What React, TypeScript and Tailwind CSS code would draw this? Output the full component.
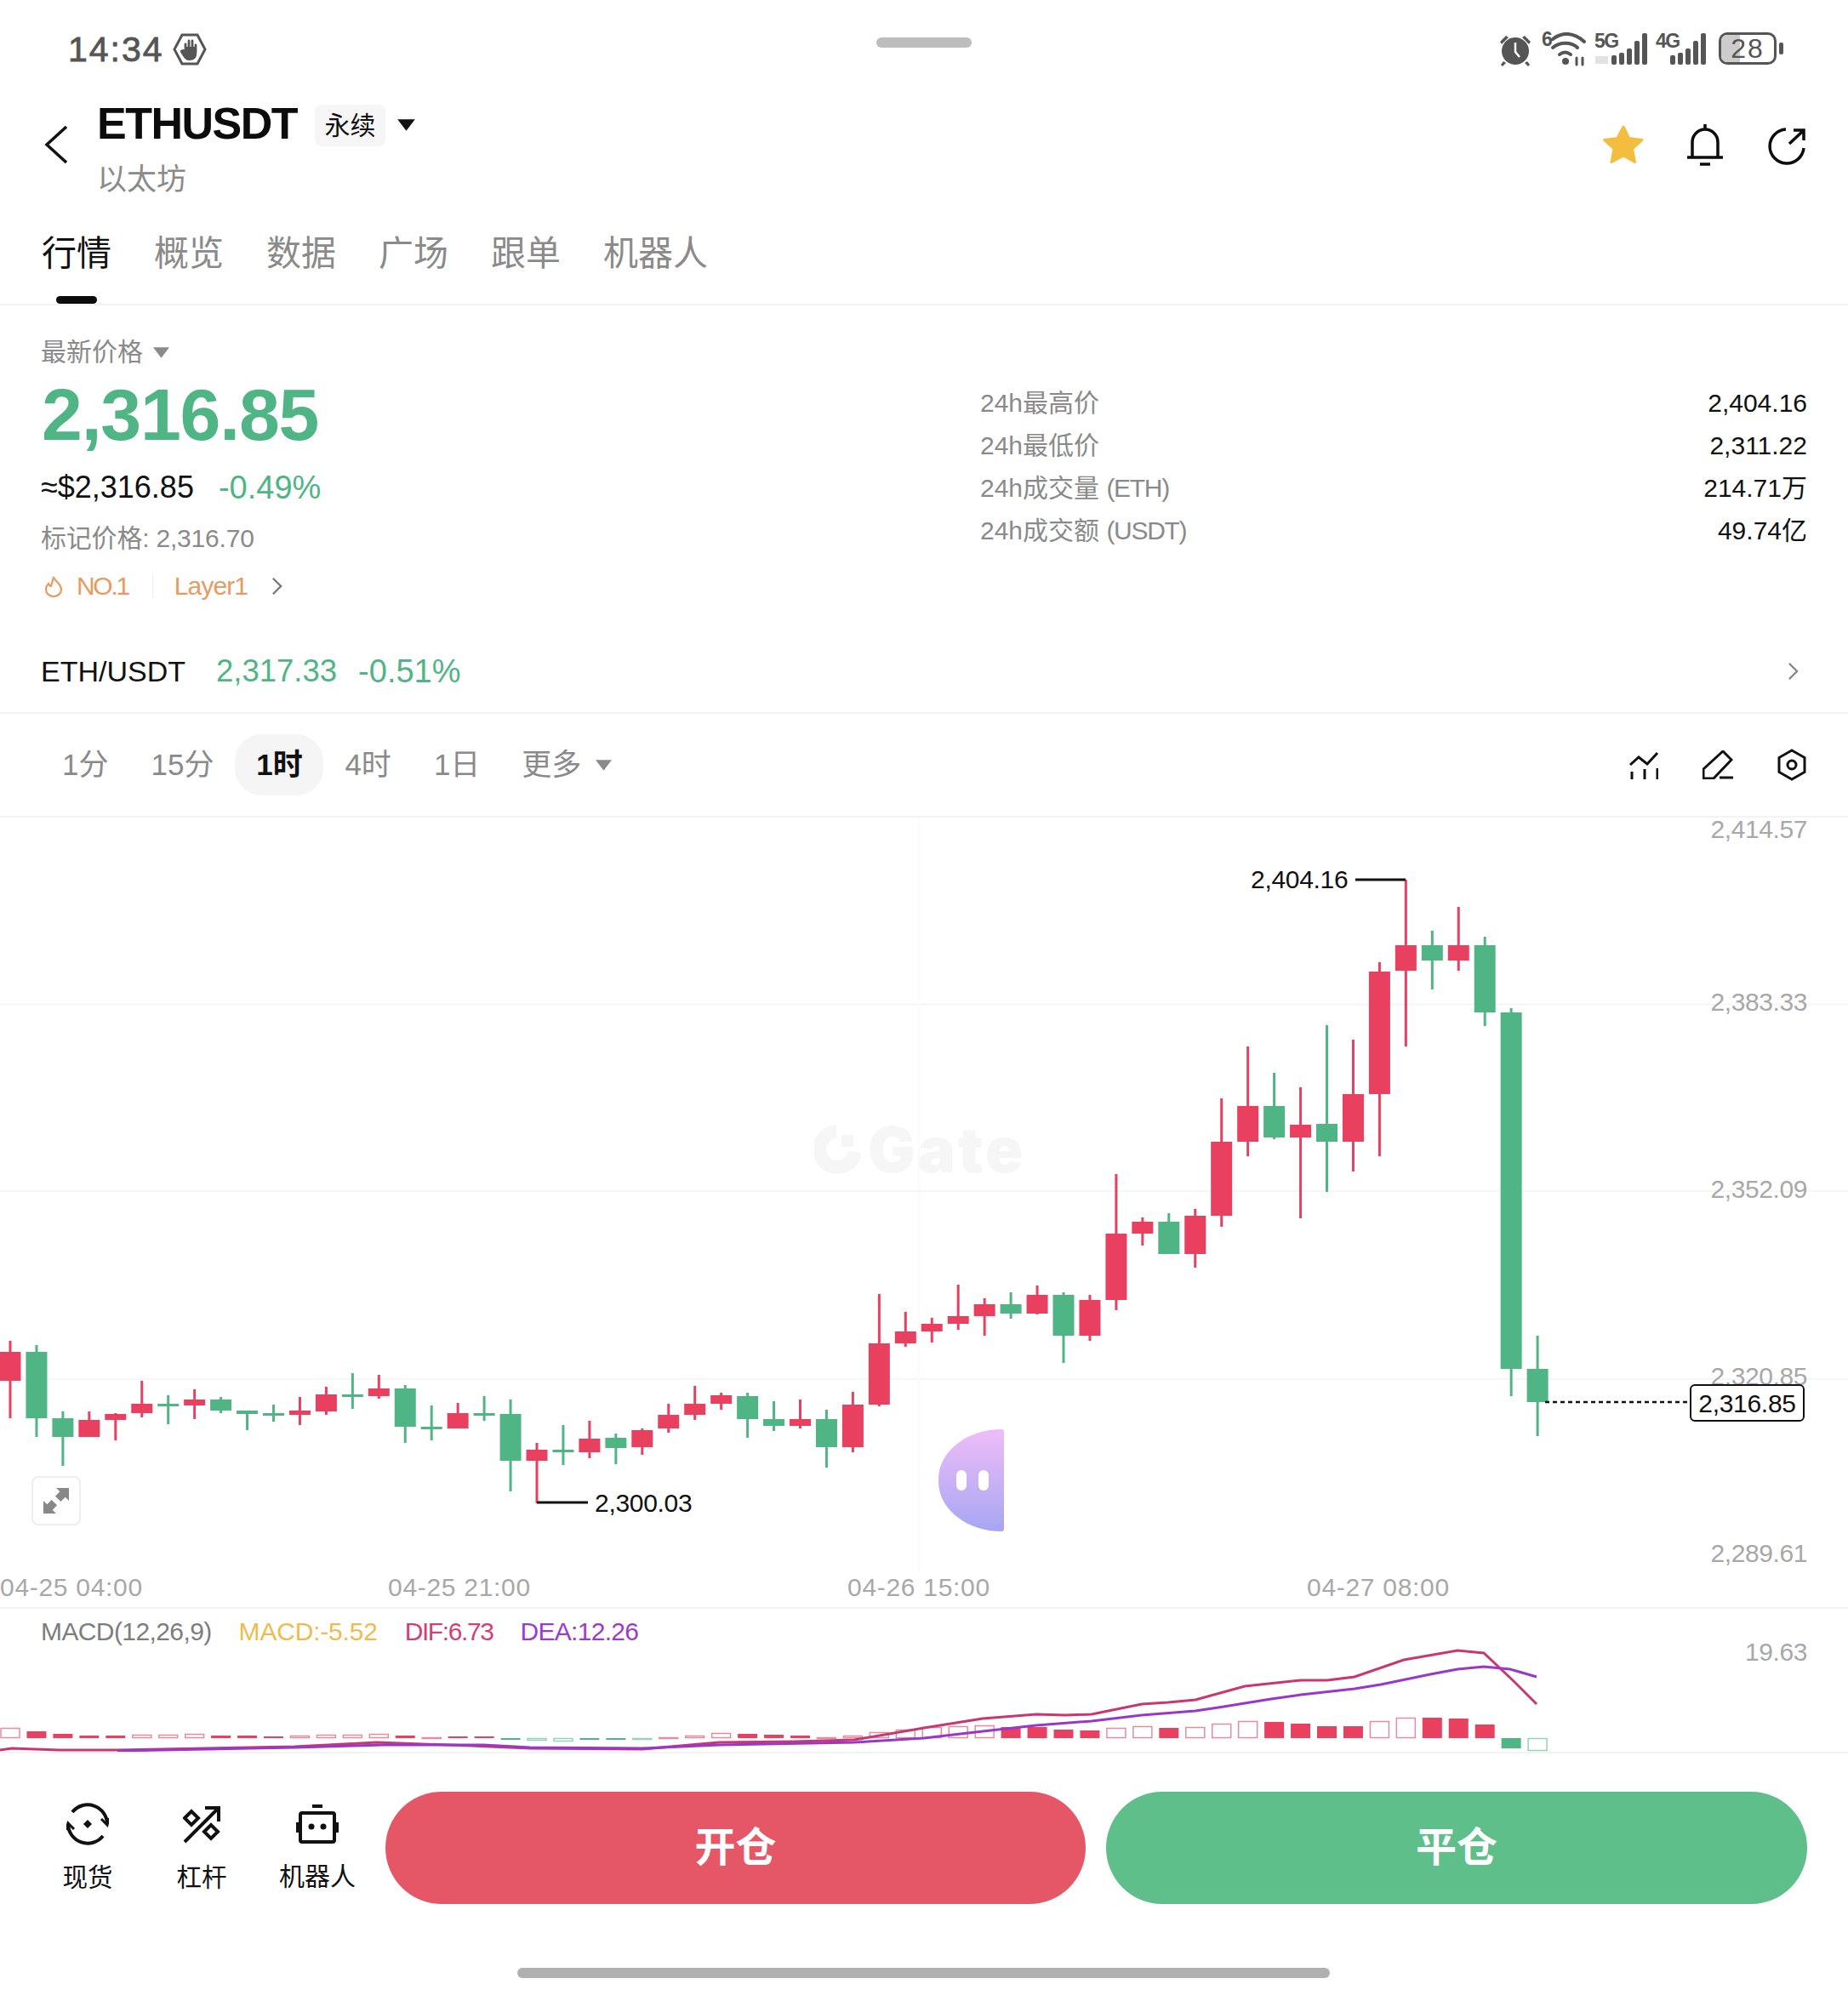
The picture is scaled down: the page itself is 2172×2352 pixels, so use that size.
const RED = "#ea4060";
const GREEN = "#50b584";

// [high, body top, body bottom, low, color] in page pixels
const candles: [number, number, number, number, "r" | "g"][] = [
  [1576, 1589, 1623, 1667, "r"], [1581, 1589, 1667, 1689, "g"], [1659, 1667, 1689, 1723, "g"], [1659, 1669, 1689, 1689, "r"],
  [1661, 1662, 1669, 1693, "r"], [1623, 1650, 1661, 1666, "r"], [1640, 1650, 1653, 1674, "g"], [1633, 1645, 1652, 1668, "r"],
  [1642, 1645, 1658, 1661, "g"], [1658, 1658, 1662, 1681, "g"], [1651, 1661, 1663, 1671, "g"], [1642, 1658, 1663, 1675, "r"],
  [1630, 1639, 1659, 1663, "r"], [1614, 1639, 1641, 1656, "g"], [1616, 1632, 1641, 1644, "r"], [1628, 1632, 1677, 1696, "g"],
  [1652, 1677, 1679, 1693, "g"], [1649, 1661, 1679, 1679, "r"], [1641, 1661, 1663, 1670, "g"], [1645, 1662, 1717, 1753, "g"],
  [1696, 1704, 1717, 1767, "r"], [1675, 1704, 1707, 1722, "g"], [1670, 1691, 1707, 1714, "r"], [1685, 1690, 1702, 1721, "g"],
  [1679, 1681, 1701, 1710, "r"], [1650, 1663, 1679, 1684, "r"], [1629, 1650, 1663, 1669, "r"], [1637, 1640, 1650, 1657, "r"],
  [1637, 1641, 1668, 1690, "g"], [1647, 1668, 1676, 1682, "g"], [1645, 1668, 1676, 1679, "r"], [1657, 1668, 1701, 1725, "g"],
  [1636, 1651, 1701, 1707, "r"], [1521, 1579, 1651, 1653, "r"], [1542, 1565, 1579, 1583, "r"], [1549, 1556, 1565, 1578, "r"],
  [1510, 1547, 1556, 1563, "r"], [1526, 1533, 1547, 1570, "r"], [1519, 1533, 1544, 1550, "g"], [1511, 1522, 1544, 1545, "r"],
  [1519, 1522, 1570, 1602, "g"], [1522, 1528, 1570, 1576, "r"], [1380, 1450, 1528, 1540, "r"], [1431, 1436, 1450, 1464, "r"],
  [1426, 1436, 1474, 1474, "g"], [1421, 1429, 1474, 1490, "r"], [1291, 1342, 1429, 1442, "r"], [1230, 1300, 1342, 1359, "r"],
  [1261, 1300, 1337, 1339, "g"], [1278, 1322, 1337, 1432, "r"], [1205, 1321, 1342, 1401, "g"], [1222, 1286, 1342, 1377, "r"],
  [1131, 1142, 1286, 1359, "r"], [1034, 1111, 1141, 1230, "r"], [1094, 1111, 1129, 1163, "g"], [1066, 1111, 1129, 1141, "r"],
  [1101, 1111, 1190, 1206, "g"], [1185, 1190, 1609, 1641, "g"], [1570, 1609, 1648, 1688, "g"],
];

// [top of bar, filled]; everything hangs off the zero line
const macdBars: [number, boolean][] = [
  [2031, false], [2035, true], [2038, true], [2040, true], [2040, true], [2039, false], [2039, false], [2038, false],
  [2040, true], [2040, true], [2041, true], [2040, false], [2039, false], [2039, false], [2038, false], [2040, true],
  [2042, false], [2041, true], [2041, true], [2043, true], [2043, false], [2043, false], [2043, true], [2043, true],
  [2043, false], [2042, false], [2040, false], [2037, false], [2038, true], [2039, true], [2040, true], [2042, false],
  [2040, false], [2036, false], [2033, false], [2030, false], [2029, false], [2028, false], [2030, true], [2030, true],
  [2033, true], [2034, true], [2031, false], [2029, false], [2031, true], [2030, false], [2026, false], [2023, false],
  [2024, true], [2026, true], [2029, true], [2029, true], [2023, false], [2019, false], [2019, true], [2020, true],
  [2027, true], [2043, true], [2043, false],
];
const greenBarBottoms: Record<number, number> = { 19: 2044, 20: 2046, 21: 2047, 22: 2045, 23: 2045, 24: 2044, 57: 2055, 58: 2058 };

const difLine =
  "0,2057 14,2055 69,2057 138,2057 242,2055 346,2053 443,2048 554,2052 623,2055 755,2056 845,2048 935,2047 1004,2045 1086,2031 1155,2020 1218,2015 1252,2016 1283,2015 1342,2003 1373,2001 1405,1998 1463,1982 1529,1975 1560,1975 1592,1971 1650,1951 1713,1940 1744,1943 1778,1975 1806,2003";
const deaLine =
  "138,2058 346,2054 450,2051 568,2051 623,2054 755,2055 845,2051 1004,2048 1086,2043 1155,2035 1218,2028 1283,2023 1342,2016 1405,2011 1432,2007 1494,1997 1529,1992 1592,1985 1623,1980 1681,1968 1713,1962 1744,1959 1775,1962 1806,1971";

const barX = (i: number) => 12 + 30.95 * i;

const tabs = ["行情", "概览", "数据", "广场", "跟单", "机器人"];
const stats = [
  ["24h最高价", "", "2,404.16"],
  ["24h最低价", "", "2,311.22"],
  ["24h成交量 ", "(ETH)", "214.71万"],
  ["24h成交额 ", "(USDT)", "49.74亿"],
];

function Caret({ className }: { className: string }) {
  return (
    <svg viewBox="0 0 20 14" className={className} fill="currentColor">
      <path d="M1 1h18L10 13z" />
    </svg>
  );
}

function Chevron({ className }: { className: string }) {
  return (
    <svg viewBox="0 0 14 24" className={className} fill="none" stroke="currentColor" strokeWidth="2.5">
      <path d="M2 2l10 10L2 22" />
    </svg>
  );
}

function Signal() {
  return (
    <div className="flex items-end gap-[3px]">
      {[11, 14, 19, 28, 37].map((h, i) => (
        <div key={i} className="w-[6px] rounded-[2px] bg-[#555]" style={{ height: h }} />
      ))}
    </div>
  );
}

function StatusBar() {
  return (
    <div className="relative flex h-[100px] shrink-0 items-start justify-between pl-[80px] pr-[76px] pt-[38px] text-[#555]">
      <div className="flex items-center gap-[10px]">
        <span className="text-[41px] leading-[40px] tracking-[2px] [-webkit-text-stroke:0.8px_#555]">14:34</span>
        <svg viewBox="0 0 40 38" className="h-[38px] w-[40px]" fill="none" stroke="#555" strokeWidth="3">
          <path d="M11 2h18l9 17-9 17H11L2 19z" />
          <path d="M15 22v-9M19 22V9M23 22V9M27 23v-9" strokeWidth="2.8" strokeLinecap="round" />
          <path fill="#555" stroke="none" d="M13 19l2 2V16h13v9c0 4-3 7-8 7-4 0-6-2-8-5l-3-5c-1-2 2-3 4-3z" />
        </svg>
      </div>
      <div className="absolute left-[1030px] top-[44px] h-[12px] w-[112px] rounded-full bg-[#bdbdbd]" />
      <div className="flex items-start">
        <svg viewBox="0 0 38 38" className="mt-[2px] h-[38px] w-[38px]" fill="#555">
          <circle cx="19" cy="20" r="16" />
          <path d="M1 9l7-7 3 2-8 8zM37 9l-7-7-3 2 8 8zM5 32l-3 4 2 2 4-4zM33 32l3 4-2 2-4-4z" />
          <path d="M19 10v11l5 6" fill="none" stroke="#fff" strokeWidth="2.5" />
        </svg>
        <div className="relative ml-[12px] h-[40px] w-[54px]">
          <span className="absolute left-0 top-[-4px] text-[23px] font-bold leading-[24px]">6</span>
          <svg viewBox="0 0 54 40" className="h-[40px] w-[54px]" fill="none" stroke="#555" strokeWidth="4" strokeLinecap="round">
            <path d="M13 8C24 -1 38 0 50 11" />
            <path d="M13 18c8-7 22-7 29 0" />
            <path d="M21 26c4-3 9-3 13 0" />
            <circle cx="28" cy="34" r="4" fill="#555" stroke="none" />
            <path d="M41 30v8M48 30v8" strokeWidth="3" />
          </svg>
        </div>
        <div className="relative ml-[8px] flex h-[38px] w-[62px] justify-end">
          <span className="absolute left-0 top-[-2px] text-[23px] font-bold leading-[24px] tracking-[-1.5px]">5G</span>
          <span className="absolute bottom-[1px] left-[1px] h-[9px] w-[15px] bg-[#e2e2e2]" />
          <Signal />
        </div>
        <div className="relative ml-[10px] flex h-[38px] w-[59px] justify-end">
          <span className="absolute left-0 top-[-2px] text-[23px] font-bold leading-[24px] tracking-[-1.5px]">4G</span>
          <Signal />
        </div>
        <div className="relative ml-[15px] flex h-[38px] w-[68px] items-center justify-center overflow-hidden rounded-[10px] border-[3px] border-[#555]">
          <div className="absolute inset-y-0 left-0 w-[22px] bg-[#ccc]" />
          <span className="relative text-[32px] leading-none tracking-[2px]">28</span>
        </div>
        <div className="ml-[3px] mt-[12px] h-[14px] w-[5px] rounded-[2px] bg-[#555]" />
      </div>
    </div>
  );
}

function Header() {
  return (
    <div className="flex h-[160px] shrink-0 items-start pl-[52px] pr-[50px]">
      <svg viewBox="0 0 28 44" className="mt-[48px] h-[44px] w-[28px]" fill="none" stroke="#111" strokeWidth="3.5">
        <path d="M26 1L3 22l23 21" />
      </svg>
      <div className="ml-[34px] flex flex-col">
        <div className="mt-[20px] flex items-center">
          <span className="relative top-[-2px] text-[52px] font-bold leading-[54px] tracking-[-1.5px] text-[#0c0c0c]">ETHUSDT</span>
          <span className="ml-[21px] flex h-[49px] w-[83px] items-center justify-center rounded-[8px] bg-[#f6f6f6] text-[30px] text-[#111]">永续</span>
          <Caret className="ml-[13px] h-[16px] w-[23px] text-[#111]" />
        </div>
        <span className="mt-[17px] text-[35px] leading-[40px] text-[#8a8a8a]">以太坊</span>
      </div>
      <div className="ml-auto mt-[46px] flex items-start">
        <svg viewBox="0 0 50 48" className="h-[48px] w-[50px]" fill="#f3bd3f" stroke="#f3bd3f" strokeWidth="3" strokeLinejoin="round">
          <path d="M25 3l6.500 13.500 15.500 2-11.500 10.500 3 15.500L25 37 11 44.500 14 29 2.500 18.500l15.500-2z" />
        </svg>
        <svg viewBox="0 0 42 50" className="ml-[50px] h-[50px] w-[42px]" fill="none" stroke="#0c0c0c" strokeWidth="3.5">
          <path d="M6 39V21a15 15 0 0 1 30 0v18M0 39h42M21 0v5" />
          <path d="M15 47h12" />
        </svg>
        <svg viewBox="0 0 44 44" className="ml-[53px] mt-[4px] h-[44px] w-[44px]" fill="none" stroke="#0c0c0c" strokeWidth="3.5">
          <path d="M21 2A20 20 0 1 0 42 24" />
          <path d="M25 19L41 4M30 3h12v12" />
        </svg>
      </div>
    </div>
  );
}

function Tabs() {
  return (
    <div className="flex h-[99px] shrink-0 items-start gap-[50px] border-b-2 border-[#f3f3f3] pl-[49px] pt-[15px]">
      {tabs.map((t, i) => (
        <div key={t} className="relative">
          <span className={i === 0 ? "block text-[41px] leading-[46px] text-[#111]" : "block text-[41px] leading-[46px] text-[#8a8a8a]"}>{t}</span>
          {i === 0 && <div className="absolute left-[17px] top-[73px] h-[9px] w-[48px] rounded-full bg-[#0c0c0c]" />}
        </div>
      ))}
    </div>
  );
}

function PriceBlock() {
  return (
    <div className="flex h-[380px] shrink-0 px-[48px]">
      <div className="w-[1104px]">
        <div className="mt-[37px] flex items-center gap-[11px] text-[#8a8a8a]">
          <span className="text-[30px] leading-[36px]">最新价格</span>
          <Caret className="h-[15px] w-[21px]" />
        </div>
        <div className="mt-[9px] pl-[1px] text-[86px] font-bold leading-[92px] tracking-[-1.2px] text-[#50b584]">2,316.85</div>
        <div className="mt-[20px] flex items-center">
          <span className="text-[36px] leading-[40px] text-[#111]">≈$2,316.85</span>
          <span className="ml-[29px] text-[38px] leading-[40px] text-[#50b584]">-0.49%</span>
        </div>
        <div className="mt-[22px] text-[30px] leading-[36px] tracking-[-0.2px] text-[#8a8a8a]">标记价格: 2,316.70</div>
        <div className="mt-[20px] flex items-center text-[30px] leading-[36px] text-[#e89a5f]">
          <svg viewBox="0 0 22 26" className="ml-[4px] h-[26px] w-[22px]" fill="none" stroke="currentColor" strokeWidth="2.2">
            <path d="M11 2c1 5 9 8 9 15a9 8 0 0 1-18 0c0-3 1-5 3-7 1 2 2 3 3 3 1-3 2-7 3-11z" />
          </svg>
          <span className="ml-[16px] tracking-[-2.3px]">NO.1</span>
          <div className="ml-[28px] h-[28px] w-[1px] bg-[#eee]" />
          <span className="ml-[25px] tracking-[-0.9px]">Layer1</span>
          <Chevron className="ml-[28px] h-[24px] w-[13px] text-[#777]" />
        </div>
      </div>
      <div className="mt-[89px] flex-1">
        {stats.map(([k, unit, v]) => (
          <div key={k} className="flex h-[50px] items-center justify-between text-[30px]">
            <span className="whitespace-pre text-[#8a8a8a]">
              {k}
              <span className="tracking-[-1.3px]">{unit}</span>
            </span>
            <span className="text-[#111]">{v}</span>
          </div>
        ))}
      </div>
    </div>
  );
}

function SpotRow() {
  return (
    <div className="flex h-[100px] shrink-0 items-start border-b-2 border-[#f3f3f3] pl-[48px] pr-[58px] pt-[30px]">
      <span className="text-[34px] leading-[40px] text-[#111]">ETH/USDT</span>
      <span className="ml-[36px] text-[36.5px] leading-[40px] text-[#50b584]">2,317.33</span>
      <span className="ml-[25px] text-[38px] leading-[40px] text-[#50b584]">-0.51%</span>
      <Chevron className="ml-auto mt-[9px] h-[22px] w-[13px] text-[#888]" />
    </div>
  );
}

function Timeframes() {
  return (
    <div className="flex h-[122px] shrink-0 items-center border-b-2 border-[#f3f3f3] pl-[73px] pr-[49px] text-[35px] text-[#8a8a8a]">
      <span>1分</span>
      <span className="ml-[50px]">15分</span>
      <span className="ml-[25px] flex h-[72px] w-[104px] items-center justify-center rounded-[32px] bg-[#f5f5f5] font-bold text-[#111]">1时</span>
      <span className="ml-[25px]">4时</span>
      <span className="ml-[50px]">1日</span>
      <span className="ml-[49px]">更多</span>
      <Caret className="ml-[16px] h-[15px] w-[21px]" />
      <svg viewBox="0 0 34 33" className="ml-auto h-[33px] w-[34px]" fill="none" stroke="#111" strokeWidth="3">
        <path d="M1 16L11 7l10 8L33 2" />
        <path d="M3 24v9M18 21v12M33 20v13" />
      </svg>
      <svg viewBox="0 0 36 34" className="ml-[52px] h-[34px] w-[36px]" fill="none" stroke="#111" strokeWidth="3">
        <path d="M1 33V22L24 1l10 10-21 22zM20 32h16" />
      </svg>
      <svg viewBox="0 0 34 38" className="ml-[52px] h-[38px] w-[34px]" fill="none" stroke="#111" strokeWidth="3">
        <path d="M17 2l15 8.500v17L17 36 2 27.500v-17z" />
        <circle cx="17" cy="19" r="5" />
      </svg>
    </div>
  );
}

function Chart() {
  return (
    <div className="relative h-[930px] shrink-0 border-b-2 border-[#f3f3f3]">
      <svg viewBox="0 961 2172 930" className="absolute inset-0 h-[930px] w-[2172px]">
        <path d="M0 1180.500H2172M0 1400H2172M0 1621H2172" stroke="#f6f6f6" strokeWidth="2" />
        <path d="M1080 961V1850" stroke="#fafafa" strokeWidth="2" />
        {candles.map(([hi, top, bot, lo, c], i) => {
          const color = c === "r" ? RED : GREEN;
          const x = barX(i);
          return (
            <g key={i} fill={color}>
              <rect x={x - 1.5} y={hi} width="3" height={lo - hi} />
              <rect x={x - 12.5} y={top} width="25" height={Math.max(bot - top, 3)} />
            </g>
          );
        })}
        <path d="M1593 1034H1652" stroke="#111" strokeWidth="3" />
        <path d="M631 1766H691" stroke="#111" strokeWidth="3" />
        <path d="M1816 1648H1986" stroke="#111" strokeWidth="2.500" strokeDasharray="5 4" />
      </svg>

      {/* watermark */}
      <div className="absolute left-[957px] top-[360px] flex items-center">
        <svg viewBox="0 0 56 58" className="h-[58px] w-[56px]" fill="none" stroke="#f6f6f7" strokeWidth="16">
          <path d="M26 8a21 21 0 1 0 22 24" />
          <path d="M32 12h14v14H32z" fill="#f6f6f7" strokeWidth="0" />
        </svg>
        <span className="ml-[7px] text-[74px] font-black leading-[60px] tracking-[3px] text-[#f6f6f7] [font-family:Inter,sans-serif]">Gate</span>
      </div>

      {/* y axis */}
      <span className="absolute right-[48px] top-[-4px] text-[30px] leading-[36px] tracking-[-0.4px] text-[#a8a8a8]">2,414.57</span>
      <span className="absolute right-[48px] top-[199px] text-[30px] leading-[36px] tracking-[-0.4px] text-[#a8a8a8]">2,383.33</span>
      <span className="absolute right-[48px] top-[419px] text-[30px] leading-[36px] tracking-[-0.4px] text-[#a8a8a8]">2,352.09</span>
      <span className="absolute right-[48px] top-[639px] text-[30px] leading-[36px] tracking-[-0.4px] text-[#a8a8a8]">2,320.85</span>
      <span className="absolute right-[48px] top-[847px] text-[30px] leading-[36px] tracking-[-0.4px] text-[#a8a8a8]">2,289.61</span>

      {/* high, low, last */}
      <span className="absolute left-[1470px] top-[55px] text-[30px] leading-[36px] tracking-[-0.3px] text-[#111]">2,404.16</span>
      <span className="absolute left-[699px] top-[788px] text-[30px] leading-[36px] tracking-[-0.3px] text-[#111]">2,300.03</span>
      <span className="absolute left-[1986px] top-[666px] flex h-[44px] w-[135px] items-center justify-center rounded-[6px] border-2 border-[#111] bg-white text-[30px] tracking-[-0.3px] text-[#111]">2,316.85</span>

      {/* expand */}
      <div className="absolute left-[37px] top-[774px] flex h-[58px] w-[58px] items-center justify-center rounded-[8px] border-2 border-[#eeeeee] bg-white">
        <svg viewBox="0 0 28 28" className="h-[30px] w-[30px]" fill="#888">
          <path d="M14 0h14v14l-4-4-5 5-6-6 5-5zM0 28V14l4 4 5-5 6 6-5 5 4 4z" />
        </svg>
      </div>

      {/* floating assistant */}
      <div className="absolute left-[1103px] top-[719px] flex h-[120px] w-[77px] items-center justify-end gap-[14px] rounded-bl-[76px_60px] rounded-tl-[76px_60px] rounded-r-[3px] bg-gradient-to-b from-[#eebcf8] to-[#a6a6f2] pr-[18px]">
        <div className="h-[24px] w-[12px] rounded-full bg-white" />
        <div className="h-[24px] w-[12px] rounded-full bg-white" />
      </div>

      {/* x axis */}
      <span className="absolute left-0 top-[887px] text-[30px] leading-[36px] tracking-[0.7px] text-[#a8a8a8]">04-25 04:00</span>
      <span className="absolute left-[456px] top-[887px] text-[30px] leading-[36px] tracking-[0.7px] text-[#a8a8a8]">04-25 21:00</span>
      <span className="absolute left-[996px] top-[887px] text-[30px] leading-[36px] tracking-[0.7px] text-[#a8a8a8]">04-26 15:00</span>
      <span className="absolute left-[1536px] top-[887px] text-[30px] leading-[36px] tracking-[0.7px] text-[#a8a8a8]">04-27 08:00</span>
    </div>
  );
}

function Macd() {
  return (
    <div className="relative h-[170px] shrink-0 border-b-2 border-[#f3f3f3]">
      <svg viewBox="0 1891 2172 168" className="absolute inset-0 h-[168px] w-[2172px]">
        {macdBars.map(([top, filled], i) => {
          const green = i in greenBarBottoms;
          const color = green ? (filled ? GREEN : "#8fd6b4") : filled ? RED : "#e68ca0";
          const bottom = green ? greenBarBottoms[i] : 2043;
          const x = barX(i);
          return filled ? (
            <rect key={i} x={x - 11.5} y={top} width="23" height={Math.max(bottom - top, 2)} fill={color} />
          ) : (
            <rect key={i} x={x - 11} y={top + 0.5} width="22" height={Math.max(bottom - top - 1, 1)} fill="none" stroke={color} strokeWidth="1.500" />
          );
        })}
        <polyline points={difLine} fill="none" stroke="#c9376f" strokeWidth="3" />
        <polyline points={deaLine} fill="none" stroke="#9738c9" strokeWidth="3" />
      </svg>
      <div className="relative flex gap-[32px] pl-[48px] pt-[9px] text-[30px] leading-[36px]">
        <span className="tracking-[-0.6px] text-[#7d7d7d]">MACD(12,26,9)</span>
        <span className="tracking-[-0.2px] text-[#eebc4e]">MACD:-5.52</span>
        <span className="tracking-[-1.4px] text-[#d23f78]">DIF:6.73</span>
        <span className="tracking-[-0.7px] text-[#9b3dcb]">DEA:12.26</span>
      </div>
      <span className="absolute right-[48px] top-[33px] text-[30px] leading-[36px] tracking-[-0.4px] text-[#a8a8a8]">19.63</span>
    </div>
  );
}

function BottomBar() {
  return (
    <div className="flex flex-1 flex-col">
      <div className="mt-[45px] flex h-[132px] items-start pl-[73px] pr-[48px]">
        <div className="flex w-[60px] flex-col items-center">
          <svg viewBox="0 0 50 50" className="mt-[13px] h-[50px] w-[50px]" fill="none" stroke="#111" strokeWidth="4">
            <path d="M48 25A23 23 0 0 0 7 11M2 25a23 23 0 0 0 41 14" />
            <path d="M41 19l7 7 2-8M9 31l-7-7-2 8" strokeWidth="3" />
            <path fill="#111" stroke="none" d="M25 20l5 5-5 5-5-5z" />
          </svg>
          <span className="mt-[21px] whitespace-nowrap text-[29.5px] leading-[34px] text-[#111]">现货</span>
        </div>
        <div className="ml-[74px] flex w-[60px] flex-col items-center">
          <svg viewBox="0 0 44 44" className="mt-[17px] h-[44px] w-[44px]" fill="none" stroke="#111" strokeWidth="4">
            <path d="M2 42L41 3M26 2h16v16" />
            <path d="M2 14l8-8 8 8-8 8zM25 30l8-8 8 8-8 8z" />
          </svg>
          <span className="mt-[23px] whitespace-nowrap text-[29.5px] leading-[34px] text-[#111]">杠杆</span>
        </div>
        <div className="ml-[76px] flex w-[60px] flex-col items-center">
          <svg viewBox="0 0 50 46" className="mt-[15px] h-[46px] w-[50px]" fill="none" stroke="#111" strokeWidth="4">
            <path d="M19 2h12" />
            <rect x="5" y="10" width="40" height="34" rx="2" />
            <path d="M2 21v12M48 21v12" strokeWidth="4.500" />
            <circle cx="18" cy="26" r="3.500" fill="#111" stroke="none" />
            <circle cx="32" cy="26" r="3.500" fill="#111" stroke="none" />
          </svg>
          <span className="mt-[22px] whitespace-nowrap text-[30px] leading-[34px] text-[#111]">机器人</span>
        </div>
        <button className="ml-[50px] flex h-[132px] w-[823px] items-center justify-center rounded-full bg-[#e55766] text-[48px] font-bold text-white">开仓</button>
        <button className="ml-[24px] flex h-[132px] flex-1 items-center justify-center rounded-full bg-[#5ebf8a] text-[48px] font-bold text-white">平仓</button>
      </div>
      <div className="ml-[608px] mt-[75px] h-[12px] w-[955px] rounded-full bg-[#b0b0b0]" />
    </div>
  );
}

export default function App() {
  return (
    <div className="flex h-[2352px] w-[2172px] flex-col overflow-hidden bg-white [font-family:'Liberation_Sans','Noto_Sans_CJK_SC',sans-serif]">
      <StatusBar />
      <Header />
      <Tabs />
      <PriceBlock />
      <SpotRow />
      <Timeframes />
      <Chart />
      <Macd />
      <BottomBar />
    </div>
  );
}
